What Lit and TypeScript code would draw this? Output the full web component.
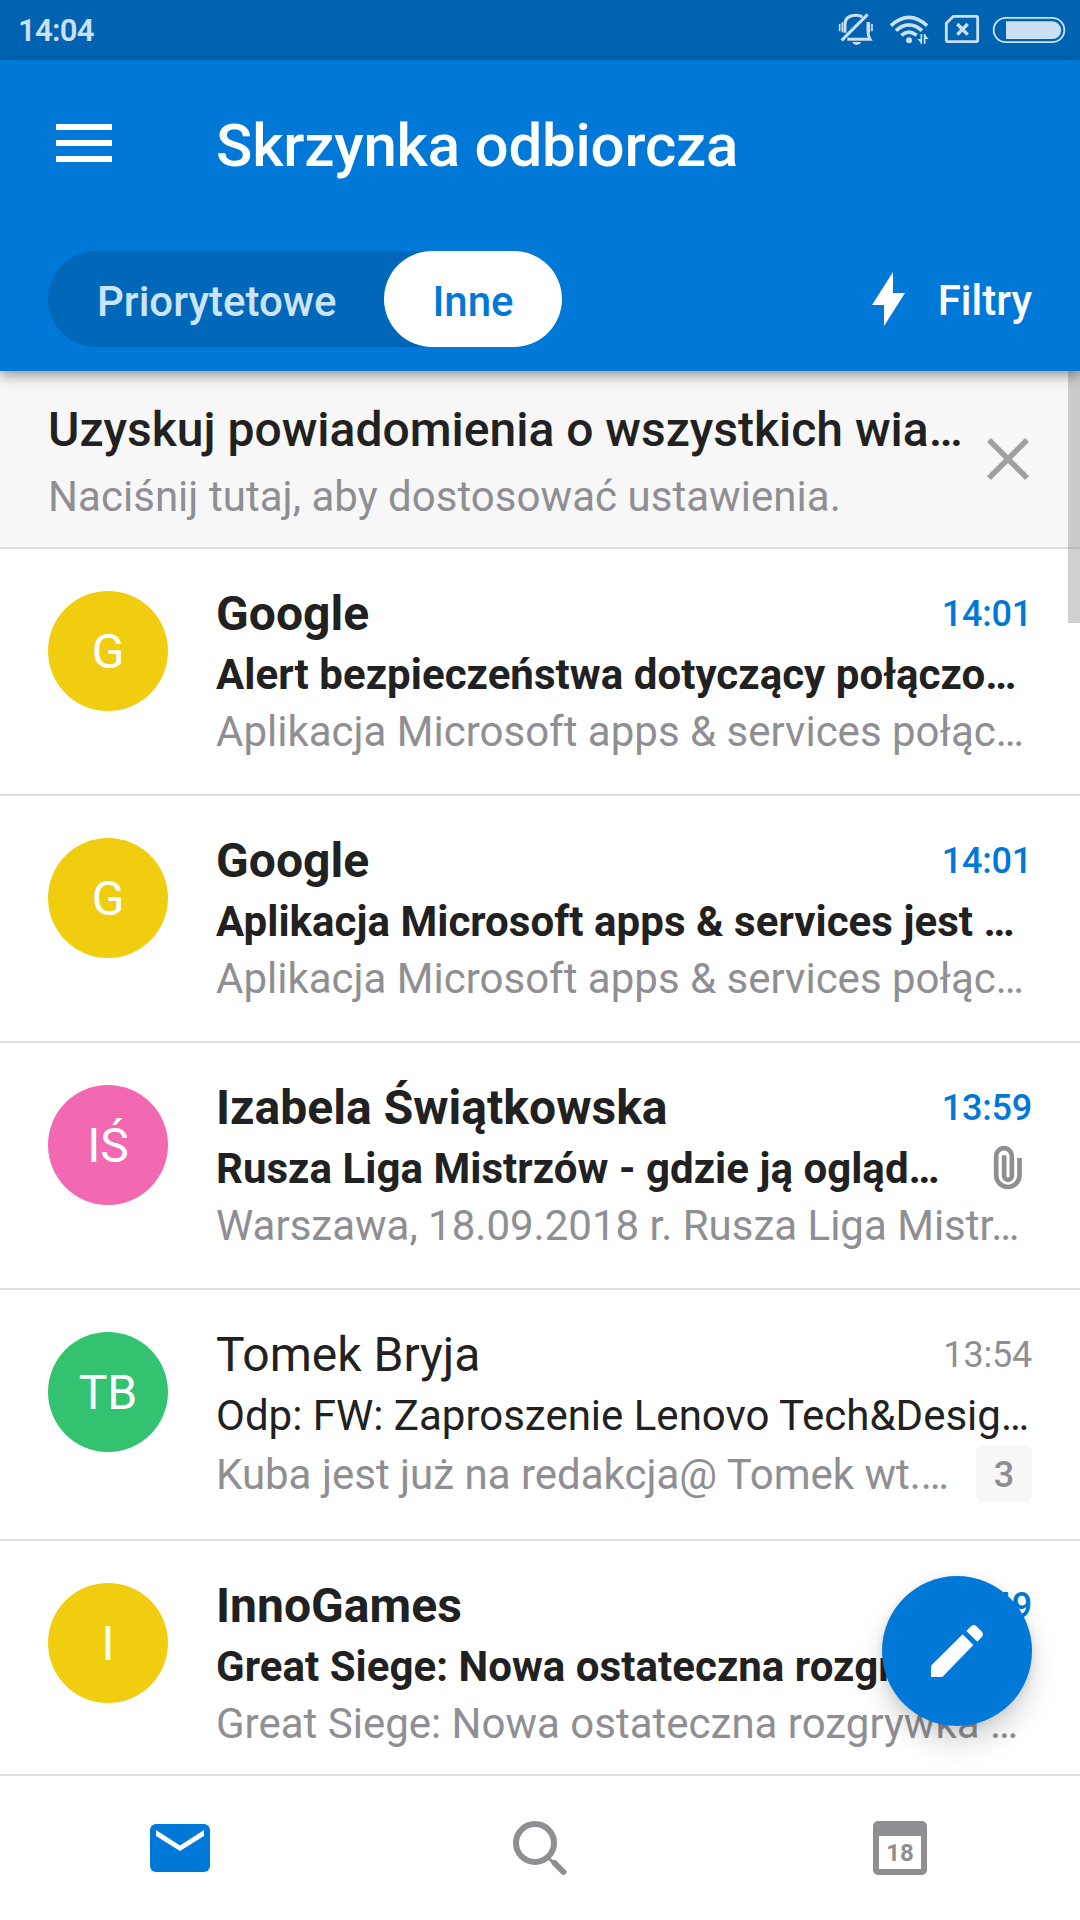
import { LitElement, html, css, svg, nothing } from "lit";
import { customElement, property } from "lit/decorators.js";
import { classMap } from "lit/directives/class-map.js";
import { styleMap } from "lit/directives/style-map.js";

interface Mail {
  initials: string;
  color: string;
  sender: string;
  subject: string;
  preview: string;
  time: string;
  unread: boolean;
  attachment?: boolean;
  count?: number;
}

const MAILS: Mail[] = [
  {
    initials: "G",
    color: "#f0cd0f",
    sender: "Google",
    subject: "Alert bezpieczeństwa dotyczący połączo…",
    preview: "Aplikacja Microsoft apps & services połąc…",
    time: "14:01",
    unread: true,
  },
  {
    initials: "G",
    color: "#f0cd0f",
    sender: "Google",
    subject: "Aplikacja Microsoft apps & services jest …",
    preview: "Aplikacja Microsoft apps & services połąc…",
    time: "14:01",
    unread: true,
  },
  {
    initials: "IŚ",
    color: "#f269b1",
    sender: "Izabela Świątkowska",
    subject: "Rusza Liga Mistrzów - gdzie ją ogląd…",
    preview: "Warszawa, 18.09.2018 r. Rusza Liga Mistr…",
    time: "13:59",
    unread: true,
    attachment: true,
  },
  {
    initials: "TB",
    color: "#33c270",
    sender: "Tomek Bryja",
    subject: "Odp: FW: Zaproszenie Lenovo Tech&Desig…",
    preview: "Kuba jest już na redakcja@ Tomek wt.…",
    time: "13:54",
    unread: false,
    count: 3,
  },
  {
    initials: "I",
    color: "#f0cd0f",
    sender: "InnoGames",
    subject: "Great Siege: Nowa ostateczna rozgryw…",
    preview: "Great Siege: Nowa ostateczna rozgrywka …",
    time: "13:49",
    unread: true,
  },
];

@customElement("status-bar")
export class StatusBar extends LitElement {
  static styles = css`
    :host {
      display: flex;
      align-items: center;
      justify-content: space-between;
      height: 60px;
      padding: 0 14px 0 18px;
      box-sizing: border-box;
      background: #0063b1;
      color: #cce0f3;
    }
    .clock {
      font-size: 31px;
      font-weight: 600;
      line-height: 36px;
      letter-spacing: -0.7px;
      padding-top: 2px;
    }
    .icons {
      display: flex;
      align-items: center;
    }
    svg {
      display: block;
    }
  `;

  render() {
    return html`
      <span class="clock">14:04</span>
      <div class="icons">
        <svg width="51" height="60" viewBox="114 0 153 180" fill="none" stroke="currentColor" stroke-width="9">
          <path d="M135 98V73q0-27 34-27q10 0 18 5M204 66v28q0 14 6 24H142" />
          <path d="M203 43L125 121" />
          <path d="M119 72v22M127 67v30M208 67v30M216 72v22" stroke-width="5" />
          <path d="M156 126h28q-5 9-14 9t-14-9z" fill="currentColor" stroke="none" />
        </svg>
        <svg width="55" height="60" viewBox="267 0 165 180" fill="none" stroke="currentColor" stroke-width="11">
          <path d="M273 77Q327 27 381 77M288 92Q327 57 366 92M304 106Q327 87 350 106" />
          <circle cx="327" cy="121" r="9" fill="currentColor" stroke="none" />
          <path d="M364 131V102M374 102V131" stroke-width="5" />
          <path d="M352 117h14v15zM386 117h-14v-15z" fill="currentColor" stroke="none" />
        </svg>
        <svg width="48" height="60" viewBox="432 0 144 180" fill="none" stroke="currentColor">
          <path d="M460 49H529Q533 49 533 53V121Q533 125 529 125H443Q439 125 439 121V70Z" stroke-width="8.500" />
          <path d="M472 72L503 104M503 72L472 104" stroke-width="10" />
        </svg>
        <svg width="74" height="60" viewBox="576 0 222 180" fill="none" stroke="currentColor">
          <rect x="581" y="53.500" width="212" height="73" rx="36.500" stroke-width="5.500" />
          <path d="M618 64H757a26.500 26.500 0 0 1 0 53H618Z" fill="currentColor" stroke="none" />
        </svg>
      </div>
    `;
  }
}

@customElement("inbox-header")
export class InboxHeader extends LitElement {
  static styles = css`
    :host {
      display: flex;
      flex-direction: column;
      height: 311px;
      position: relative;
      z-index: 2;
      background: #0078d7;
      color: #fff;
      box-shadow: 0 5px 12px rgba(0, 0, 0, 0.38);
    }
    .bar {
      display: flex;
      align-items: center;
      gap: 104px;
      height: 168px;
      padding: 0 56px;
    }
    .burger {
      display: flex;
      flex-direction: column;
      gap: 10px;
      width: 56px;
      padding-bottom: 2px;
    }
    .line {
      height: 6px;
      background: #fff;
    }
    .title {
      margin: 0;
      font-size: 60px;
      font-weight: 500;
      line-height: 70px;
      letter-spacing: -0.2px;
      white-space: nowrap;
      padding-top: 4px;
    }
    .tools {
      display: flex;
      align-items: center;
      justify-content: space-between;
      padding: 23px 48px 0;
    }
    .switch {
      display: flex;
      height: 96px;
      border-radius: 48px;
      background: #0067b9;
      font-size: 42px;
      font-weight: 500;
      line-height: 102px;
    }
    .tab {
      padding: 0 48px 0 49px;
      color: #cce4f7;
    }
    .tab.active {
      padding: 0 48px;
      border-radius: 48px;
      background: #fff;
      color: #0078d7;
    }
    .filter {
      display: flex;
      align-items: center;
      gap: 33px;
      font-size: 42px;
      font-weight: 500;
      line-height: 92px;
    }
    .label {
      padding-top: 4px;
    }
    .bolt {
      display: block;
    }
  `;

  render() {
    return html`
      <div class="bar">
        <div class="burger">
          <span class="line"></span><span class="line"></span><span class="line"></span>
        </div>
        <h1 class="title">Skrzynka odbiorcza</h1>
      </div>
      <div class="tools">
        <div class="switch">
          <span class="tab">Priorytetowe</span>
          <span class="tab active">Inne</span>
        </div>
        <div class="filter">
          <svg class="bolt" width="33" height="54" viewBox="0 0 33 54" fill="currentColor">
            <path d="M21 0V21H33L12 54V33H0Z" />
          </svg>
          <span class="label">Filtry</span>
        </div>
      </div>
    `;
  }
}

@customElement("notice-banner")
export class NoticeBanner extends LitElement {
  static styles = css`
    :host {
      display: flex;
      flex: none;
      align-items: center;
      justify-content: space-between;
      height: 178px;
      box-sizing: border-box;
      padding: 0 36px 0 48px;
      background: #f7f7f7;
      border-bottom: 2px solid #dfdfdf;
    }
    .text {
      display: flex;
      flex-direction: column;
      gap: 14px;
      white-space: nowrap;
      padding-top: 5px;
    }
    .head {
      font-size: 48px;
      font-weight: 500;
      line-height: 56px;
      color: #212121;
    }
    .sub {
      font-size: 42px;
      line-height: 50px;
      letter-spacing: 0.04px;
      color: #8e8e93;
    }
    .close {
      display: block;
      flex: none;
    }
  `;

  render() {
    return html`
      <div class="text">
        <span class="head">Uzyskuj powiadomienia o wszystkich wia…</span>
        <span class="sub">Naciśnij tutaj, aby dostosować ustawienia.</span>
      </div>
      <svg class="close" width="72" height="72" viewBox="0 0 72 72">
        <path d="M17 17L55 55M55 17L17 55" stroke="#a0a0a2" stroke-width="5.500" />
      </svg>
    `;
  }
}

@customElement("mail-row")
export class MailRow extends LitElement {
  @property({ attribute: false }) mail!: Mail;

  static styles = css`
    :host {
      display: block;
      flex: none;
    }
    .row {
      display: flex;
      gap: 48px;
      padding: 36px 48px 37px;
      border-bottom: 2px solid #dfdfdf;
    }
    .avatar {
      flex: none;
      width: 120px;
      height: 120px;
      margin-top: 6px;
      border-radius: 50%;
      color: #fff;
      font-size: 48px;
      line-height: 121px;
      text-align: center;
    }
    .body {
      flex: 1;
      min-width: 0;
      display: flex;
      flex-direction: column;
      white-space: nowrap;
      color: #212121;
    }
    .line {
      display: flex;
      justify-content: space-between;
    }
    .sender {
      font-size: 48px;
      line-height: 58px;
    }
    .time {
      font-size: 36px;
      line-height: 58px;
      letter-spacing: -0.2px;
      color: #8e8e93;
    }
    .subject {
      font-size: 42px;
      line-height: 50px;
      padding-top: 7px;
    }
    .preview {
      font-size: 42px;
      line-height: 50px;
      padding-top: 7px;
      color: #8e8e93;
    }
    .unread .sender,
    .unread .subject {
      font-weight: 700;
      letter-spacing: 0.04px;
    }
    .unread .time {
      font-weight: 500;
      color: #0078d7;
    }
    .clip {
      display: block;
      margin: 8px 8px 0 0;
    }
    .threaded {
      height: 61px;
    }
    .threaded .preview {
      padding-top: 9px;
    }
    .badge {
      width: 56px;
      height: 58px;
      margin-top: 4px;
      border-radius: 8px;
      background: #f7f7f7;
      color: #8e8e93;
      font-size: 36px;
      font-weight: 500;
      line-height: 60px;
      text-align: center;
    }
  `;

  render() {
    const m = this.mail;
    return html`
      <article class=${classMap({ row: true, unread: m.unread })}>
        <div class="avatar" style=${styleMap({ background: m.color })}>${m.initials}</div>
        <div class="body">
          <div class="line">
            <span class="sender">${m.sender}</span>
            <span class="time">${m.time}</span>
          </div>
          <div class="line">
            <span class="subject">${m.subject}</span>
            ${m.attachment
              ? html`<svg class="clip" width="32" height="45" viewBox="1176 255 96 135" fill="none" stroke="#8e8e93" stroke-width="14">
                  <path d="M1258.500 294V346a35 35 0 0 1-70 0V288a23.500 23.500 0 0 1 47 0V348a11.500 11.500 0 0 1-23 0V286" />
                </svg>`
              : nothing}
          </div>
          <div class=${classMap({ line: true, threaded: m.count !== undefined })}>
            <span class="preview">${m.preview}</span>
            ${m.count !== undefined ? html`<span class="badge">${m.count}</span>` : nothing}
          </div>
        </div>
      </article>
    `;
  }
}

@customElement("nav-bar")
export class NavBar extends LitElement {
  static styles = css`
    :host {
      display: grid;
      grid-template-columns: repeat(3, 1fr);
      align-items: center;
      justify-items: center;
      height: 146px;
      box-sizing: border-box;
      background: #fff;
      border-top: 2px solid #dfdfdf;
    }
    .icon {
      display: block;
    }
    .day {
      font: 700 24px Roboto, sans-serif;
    }
  `;

  private searchIcon = svg`
    <circle cx="22" cy="22" r="19" fill="none" stroke="#8e8e93" stroke-width="6" />
    <path d="M36 37.500L42 43" stroke="#8e8e93" stroke-width="3" />
    <path d="M41.500 42L50.500 51" stroke="#8e8e93" stroke-width="6" stroke-linecap="round" />
  `;

  render() {
    return html`
      <svg class="icon" width="60" height="48" viewBox="0 0 60 48">
        <rect width="60" height="48" rx="6" fill="#0078d7" />
        <path d="M6 6L30 21.500L54 6V12L30 27L6 12Z" fill="#fff" />
      </svg>
      <svg class="icon" width="54" height="54" viewBox="0 0 54 54">${this.searchIcon}</svg>
      <svg class="icon" width="54" height="54" viewBox="0 0 54 54">
        <path d="M5 0H49a5 5 0 0 1 5 5V49a5 5 0 0 1-5 5H5a5 5 0 0 1-5-5V5a5 5 0 0 1 5-5ZM6 15V48H48V15Z" fill="#8e8e93" fill-rule="evenodd" />
        <text class="day" x="27" y="40" text-anchor="middle" fill="#8e8e93">18</text>
      </svg>
    `;
  }
}

@customElement("app-root")
export class AppRoot extends LitElement {
  static styles = css`
    :host {
      display: block;
      font-family: Roboto, sans-serif;
    }
    .screen {
      position: relative;
      display: flex;
      flex-direction: column;
      width: 1080px;
      height: 1920px;
      overflow: hidden;
      background: #fff;
    }
    .list {
      position: relative;
      flex: 1;
      min-height: 0;
      display: flex;
      flex-direction: column;
      overflow: hidden;
    }
    .scrollbar {
      position: absolute;
      top: 0;
      right: 0;
      width: 12px;
      height: 252px;
      background: rgba(128, 128, 132, 0.37);
    }
    .fab {
      position: absolute;
      right: 48px;
      bottom: 194px;
      width: 150px;
      height: 150px;
      border-radius: 50%;
      background: #0078d7;
      box-shadow: 0 16px 28px rgba(0, 0, 0, 0.16), 0 2px 10px rgba(0, 0, 0, 0.1);
    }
    .pencil {
      display: block;
    }
  `;

  render() {
    return html`
      <div class="screen">
        <status-bar></status-bar>
        <inbox-header></inbox-header>
        <main class="list">
          <notice-banner></notice-banner>
          ${MAILS.map((mail) => html`<mail-row .mail=${mail}></mail-row>`)}
          <div class="scrollbar"></div>
        </main>
        <nav-bar></nav-bar>
        <div class="fab">
          <svg class="pencil" width="150" height="150" viewBox="306 108 450 450" fill="#fff">
            <path d="M453 411V377L548 283L580 315L487 411Z" />
            <path d="M559 273L574 258Q581 252 588 257L606 275Q612 283 606 290L592 305Z" />
          </svg>
        </div>
      </div>
    `;
  }
}
